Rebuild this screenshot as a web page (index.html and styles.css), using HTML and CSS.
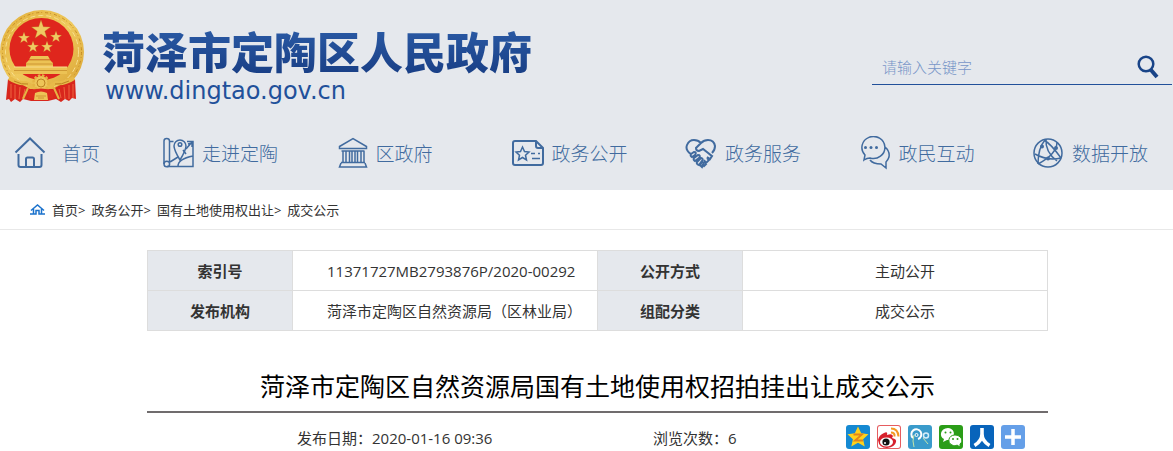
FILE: index.html
```html
<!DOCTYPE html>
<html lang="zh-CN">
<head>
    <meta charset="UTF-8">
    <meta name="viewport" content="width=device-width, initial-scale=1.0">
    <title>菏泽市定陶区人民政府</title>
    <link rel="stylesheet" href="styles.css">
</head>
<body>
    <svg class="defs" aria-hidden="true">
        <symbol id="star" viewBox="-10 -10 20 20"><path d="M0-10 2.35-3.24 9.51-3.09 3.8 1.24 5.88 8.09 0 4-5.88 8.09-3.8 1.24-9.51-3.09-2.35-3.24z"/></symbol>
    </svg>
    <header>
        <div class="top">
            <a class="logo" href="#">
                <svg class="emblem" viewBox="0 10 85 93">
                    <defs>
                        <linearGradient id="gold" x1="0" y1="0" x2="1" y2="1">
                            <stop offset="0" stop-color="#e2b03c"/>
                            <stop offset=".5" stop-color="#efc95c"/>
                            <stop offset="1" stop-color="#d9a232"/>
                        </linearGradient>
                    </defs>
                    <circle cx="42" cy="52" r="42" fill="url(#gold)"/>
                    <circle cx="42" cy="52" r="39.500" fill="none" stroke="#c58d26" stroke-width="1" stroke-dasharray="3 2 1 3"/>
                    <circle cx="42" cy="52" r="36.500" fill="none" stroke="#f8de8d" stroke-width="1" stroke-dasharray="5 3"/>
                    <ellipse cx="41.500" cy="49" rx="32" ry="31" fill="#df261d"/>
                    <path d="M8 79l13 5 9 5h23l9-5 13-5 1 20-4-1-3 3-4-2-4 3-5-3-8 2H31l-8-2-3 3-5-3-4 3-2-3-3 1z" fill="#d8261c"/>
                    <path d="M11 84v14M15 85v14M20 87l-1 12M25 89l-2 9M59 89l2 9M64 87l1 12M69 85v14M73 84v14" stroke="#ee6440" stroke-width="1"/>
                    <g fill="#efca62" stroke="#b9781d" stroke-width=".3">
                        <use href="#star" x="31" y="20" width="20" height="20"/>
                        <use href="#star" x="18" y="32" width="12" height="12"/>
                        <use href="#star" x="27" y="41" width="12" height="12"/>
                        <use href="#star" x="41" y="41" width="12" height="12"/>
                        <use href="#star" x="50" y="31" width="12" height="12"/>
                    </g>
                    <path d="M31 56h17l2 3.500H29zM29 60h21l3 3v4H26v-4zM14 67h53v7H14z" fill="#ecc254"/>
                    <path d="M29 60h21M26 64h27M14 70.500h53" stroke="#c68b2b" stroke-width=".8"/>
                    <path d="M14 67h53" stroke="#f8df8e" stroke-width="1"/>
                    <path d="M9 78q9 6 17 5l7 4q8 5 16 0l7-4q9 1 18-5" fill="none" stroke="#e8ba49" stroke-width="4"/>
                    <path d="M14 81q8 4 14 3M69 81q-8 4-14 3" fill="none" stroke="#bd8222" stroke-width="1"/>
                    <circle cx="41" cy="83" r="7" fill="#edc558"/>
                    <circle cx="41" cy="83" r="7.500" fill="none" stroke="#e5b343" stroke-width="2.500" stroke-dasharray="2.500 1.500"/>
                    <circle cx="41" cy="83" r="4" fill="none" stroke="#bd8222" stroke-width="1"/>
                    <path d="M27 91q14-5 28 0l-2 7-12 2-12-2z" fill="#dc2a1e"/>
                    <path d="M28 88l-5 11M54 88l5 11" stroke="#e5b343" stroke-width="2"/>
                    <path d="M35 93q6-3 12 0l1 7H34z" fill="#edc457"/>
                    <path d="M36 96h10M38 98h6" stroke="#c68b2b" stroke-width=".8"/>
                </svg>
                <span class="logo-text">
                    <strong>菏泽市定陶区人民政府</strong>
                    <span class="domain">www.dingtao.gov.cn</span>
                </span>
            </a>
            <form class="search">
                <input type="text" name="keyword" aria-label="关键字" placeholder="请输入关键字">
                <button type="button" aria-label="搜索">
                    <svg viewBox="0 0 22 24"><circle cx="9" cy="9" r="7.300"/><path d="M14 15l6 7" class="handle"/></svg>
                </button>
            </form>
        </div>
        <nav>
            <a href="#" class="home">
                <svg viewBox="0 0 34 34"><path class="thick" d="M1.500 16.500 16 2.500l14.500 14M4.500 18v11q0 2 2 2h19q2 0 2-2V18M12 31v-8q0-1.500 1.500-1.500h5q1.500 0 1.500 1.500v8"/></svg>
                首页
            </a>
            <a href="#">
                <svg viewBox="0 0 34 34"><path d="M2 28V5q0-2.500 2.700-2.500T7.500 5v21M7.500 5.500h4M25 5.500h6v25H5M8 26l8-5M16 30q0-7 15-10M21 14l3 4M24 13l6-7M26 8l4-1v4"/><circle cx="4.800" cy="28" r="2.800"/><path d="M18 24q-6-10-6-14a6 6 0 0 1 12 0q0 4-6 14z"/><circle cx="18" cy="8.500" r="1.800"/></svg>
                走进定陶
            </a>
            <a href="#">
                <svg viewBox="0 0 34 34"><path d="M3.500 10.500 17 2.500l13.500 8v2h-27zM5.500 15h23M7 15v12M10 15v12M13.500 15v12M16 15v12M19 15v12M21.500 15v12M25 15v12M28 15v12M5 26.500h24M5 27l-1.500 4h27L29 27"/></svg>
                区政府
            </a>
            <a href="#">
                <svg viewBox="0 0 34 34"><path class="thick" d="M3 5h21l7 7v15q0 2-2 2H3q-2 0-2-2V7q0-2 2-2zM24 5v5q0 2 2 2h5"/><path d="M10.500 11l2 4.500 4.500.5-3.500 3.200 1 4.800-4-2.500-4 2.500 1-4.800L4 16l4.500-.5zM19 17.500h4M20 22.500h8M26 17.500h2"/></svg>
                政务公开
            </a>
            <a href="#">
                <svg viewBox="0 0 34 34"><path class="thick" d="M6 18Q0 14 2 9q2-5 7-5 4 0 7 3 3-3 7-3 6 0 7 6 0 4-3 7M16 7l-5 5q0 3 3 3l4-2 9 7M24 18l3 2-2 3-3-2M22 22l2 2-3 3-2-3M19 25l2 3-2 2-2-2"/><path class="thick" d="M6 18l3-2q3 0 1 3l-3 2q-2-1-1-3zM9 22l4-3q3 0 1 3l-4 3q-2-1-1-3zM12 26l4-4q3 1 1 3l-3 4q-3-1-2-3zM15 29l2-3q3 1 1 3l-1 2z"/></svg>
                政务服务
            </a>
            <a href="#">
                <svg viewBox="0 0 34 34"><path d="M5 24l1-5A11.500 11 0 1 1 11 22q-3 0-6 2zM26 11q5 4 4 10-1 3-3 5v6l-5-4q-8 0-11-4"/><g class="dots"><circle cx="6.500" cy="11.500" r="1.500"/><circle cx="12" cy="11.500" r="1.500"/><circle cx="17.500" cy="11.500" r="1.500"/></g></svg>
                政民互动
            </a>
            <a href="#">
                <svg viewBox="0 0 34 34"><circle cx="16" cy="17" r="14"/><path d="M6 28Q6 12 13 4M12 4Q19 8 29 22M25 6q0 12-19 22M3 18q12 7 26 4M14 3q-1 13 11 22"/><g class="dots"><circle cx="10" cy="10.500" r="2"/><circle cx="24" cy="12" r="2"/><circle cx="16" cy="22.500" r="2"/></g></svg>
                数据开放
            </a>
        </nav>
    </header>
    <div class="breadcrumb">
        <svg viewBox="0 0 15 11"><path d="M1 6.500l6.500-5.500 6.500 5.500M3.500 5v5M11.500 5v5M0 10h6V6.500h3V10h6"/></svg>
        <a href="#">首页</a><span>&gt;</span>
        <a href="#">政务公开</a><span>&gt;</span>
        <a href="#">国有土地使用权出让</a><span>&gt;</span>
        <a href="#">成交公示</a>
    </div>
    <main>
        <table>
            <tr>
                <th scope="row">索引号</th>
                <td class="left">11371727MB2793876P/2020-00292</td>
                <th scope="row">公开方式</th>
                <td class="right">主动公开</td>
            </tr>
            <tr>
                <th scope="row">发布机构</th>
                <td class="left">菏泽市定陶区自然资源局（区林业局）</td>
                <th scope="row">组配分类</th>
                <td class="right">成交公示</td>
            </tr>
        </table>
        <h1>菏泽市定陶区自然资源局国有土地使用权招拍挂出让成交公示</h1>
        <div class="meta">
            <span>发布日期：2020-01-16 09:36</span>
            <span>浏览次数：6</span>
            <div class="share">
                <a href="#" class="qzone" aria-label="QQ空间">
                    <svg viewBox="0 0 24 24"><path d="M12 1.500l3.200 6.800 7.300.9-5.400 5 1.600 7.300-6.700-3.700-6.700 3.700 1.600-7.300-5.400-5 7.300-.9z" fill="#ffd21c"/><path d="M7.500 9.500H16l-7 6h8" stroke="#e2841c" stroke-width="1.800" fill="none"/></svg>
                </a>
                <a href="#" class="weibo" aria-label="新浪微博">
                    <svg viewBox="0 0 24 24"><path d="M1 15q1-5 6-7 4-2 3 2 5-2 6 1l-1 2q5 1 4 4-1 5-9 6-8 0-9-8z" fill="#d6202c"/><ellipse cx="9.500" cy="17" rx="6.500" ry="4.500" fill="#fff"/><circle cx="9" cy="17" r="3.600" fill="#111"/><circle cx="8" cy="18" r="1" fill="#fff"/><path d="M14 3.500q7 0 7.500 8M14 7.500q4 0 3.500 4" stroke="#f39a24" stroke-width="2" fill="none"/></svg>
                </a>
                <a href="#" class="tqq" aria-label="腾讯微博">
                    <svg viewBox="0 0 24 24" fill="none" stroke="#fff"><path d="M5 13a5 5 0 1 1 5 1" stroke-width="2"/><circle cx="8.500" cy="10" r="1.500"/><circle cx="18" cy="10.500" r="2.500" stroke="#d4edf9" stroke-width="1.500"/><path d="M6 10q-2 6 0 12M15 13l5 6" stroke="#c7e6a8" stroke-width="1"/></svg>
                </a>
                <a href="#" class="wechat" aria-label="微信">
                    <svg viewBox="0 0 24 24"><path d="M9 3c-8 0-9 9-4 11l-1 3 4-2c8 0 10-11 1-12z" fill="#fff"/><path d="M16 10c-7 0-8 8-3 10 2 1 4 1 5 0l3 2v-3c4-3 1-9-5-9z" fill="#fff" stroke="#2b9d18" stroke-width="1"/><g fill="#2b9d18"><circle cx="6.500" cy="7.500" r="1"/><circle cx="11.500" cy="7.500" r="1"/><circle cx="14" cy="14" r="1"/><circle cx="18.500" cy="14" r="1"/></g></svg>
                </a>
                <a href="#" class="renren" aria-label="人人网">
                    <svg viewBox="0 0 24 24"><path d="M12 3v6q0 7-7.500 11.500M12 9q0 7 7.500 11.500" stroke="#fff" stroke-width="3.600" fill="none"/></svg>
                </a>
                <a href="#" class="more" aria-label="更多">
                    <svg viewBox="0 0 24 24"><path d="M12 4v16M4 12h16" stroke="#fff" stroke-width="3.500"/></svg>
                </a>
            </div>
        </div>
    </main>
</body>
</html>
```

FILE: styles.css
```css
body {
    margin: 0;
    font-family: "Open Sans", "Noto Sans CJK SC", sans-serif;
    font-size: 15px;
    color: #333;
    background-color: #fff;
}

a {
    color: inherit;
    text-decoration: none;
}

svg {
    display: block;
    flex: none;
}

.defs {
    position: absolute;
    width: 0;
    height: 0;
}

header {
    background-color: #e5e8ed;
    padding-bottom: 20px;
}

.top {
    display: flex;
    justify-content: space-between;
    align-items: flex-start;
    padding-top: 10px;
}

.logo {
    display: flex;
    gap: 17px;
}

.emblem {
    width: 85px;
    height: 93px;
}

.logo-text {
    display: flex;
    flex-direction: column;
    gap: 4px;
    padding-top: 16px;
    color: #21509a;
}

.logo-text strong {
    font-family: "Noto Sans CJK SC", sans-serif;
    font-size: 43px;
    font-weight: 900;
    line-height: 48px;
    color: transparent;
    background: linear-gradient(#2b5ba6, #193f86);
    background-clip: text;
}

.domain {
    font-family: "DejaVu Sans", sans-serif;
    font-size: 24px;
    line-height: 27px;
    padding-left: 3px;
}

.search {
    display: flex;
    align-items: center;
    width: 300px;
    height: 34px;
    margin: 40px 1px 0 0;
    border-bottom: 1px solid #21509a;
}

.search input {
    flex: 1;
    min-width: 0;
    padding: 0 10px;
    border: 0;
    outline: none;
    background: none;
    font-family: inherit;
    font-size: 15px;
    font-weight: 300;
}

.search input::placeholder {
    color: #7896c8;
}

.search button {
    padding: 0 13px 0 0;
    border: 0;
    background: none;
    cursor: pointer;
}

.search svg {
    width: 22px;
    height: 24px;
    fill: none;
    stroke: #194488;
    stroke-width: 2.5;
}

.search .handle {
    stroke-width: 4;
}

nav {
    display: grid;
    grid-template-columns: 148px 1fr 176px repeat(3, 1fr) 116px;
    padding: 31px 25px 0 14px;
    font-family: "Noto Sans CJK SC", sans-serif;
    font-size: 19px;
    font-weight: 300;
    line-height: 34px;
    color: #416b9f;
}

nav a {
    display: flex;
    align-items: center;
    gap: 6px;
    white-space: nowrap;
}

nav .home {
    gap: 14px;
}

nav svg {
    width: 34px;
    height: 34px;
    fill: none;
    stroke: #416b9f;
    stroke-width: 1.5;
}

nav .thick {
    stroke-width: 2;
}

nav .dots {
    fill: #416b9f;
    stroke: none;
}

.breadcrumb {
    display: flex;
    align-items: center;
    height: 39px;
    padding-left: 30px;
    border-bottom: 1px solid #e8e8e8;
    font-size: 13px;
}

.breadcrumb svg {
    width: 15px;
    height: 11px;
    margin-right: 7px;
    fill: none;
    stroke: #1b72cc;
    stroke-width: 1.5;
}

.breadcrumb span {
    margin-right: 6px;
}

main {
    padding: 20px 125px 0 147px;
}

table {
    width: 100%;
    border-collapse: collapse;
    table-layout: fixed;
}

th,
td {
    height: 39px;
    padding: 0;
    border: 1px solid #ddd;
    line-height: 24px;
    text-align: center;
}

th {
    width: 16%;
    background-color: #e5e8ed;
}

td.left {
    padding-left: 34px;
    text-align: left;
    white-space: nowrap;
}

td.right {
    padding-left: 20px;
}

h1 {
    margin: 36px 0 0;
    padding-bottom: 6px;
    border-bottom: 2px solid #706c6d;
    font-size: 25px;
    font-weight: 400;
    line-height: 38px;
    text-align: center;
    color: #000;
}

.meta {
    display: grid;
    grid-template-columns: 356fr 193fr 202fr;
    align-items: center;
    padding: 12px 0 0 150px;
}

.share {
    display: flex;
    gap: 7px;
}

.share a {
    border-radius: 3px;
    background-color: #1589d2;
}

.share svg {
    width: 24px;
    height: 24px;
}

.share .weibo {
    background-color: #fff;
    box-shadow: inset 0 0 0 1px #e65c5f;
}

.share .tqq {
    background-color: #3a9bcb;
}

.share .wechat {
    background-color: #2b9d18;
}

.share .renren {
    background-color: #0864bb;
}

.share .more {
    background-color: #659fe8;
}
```
